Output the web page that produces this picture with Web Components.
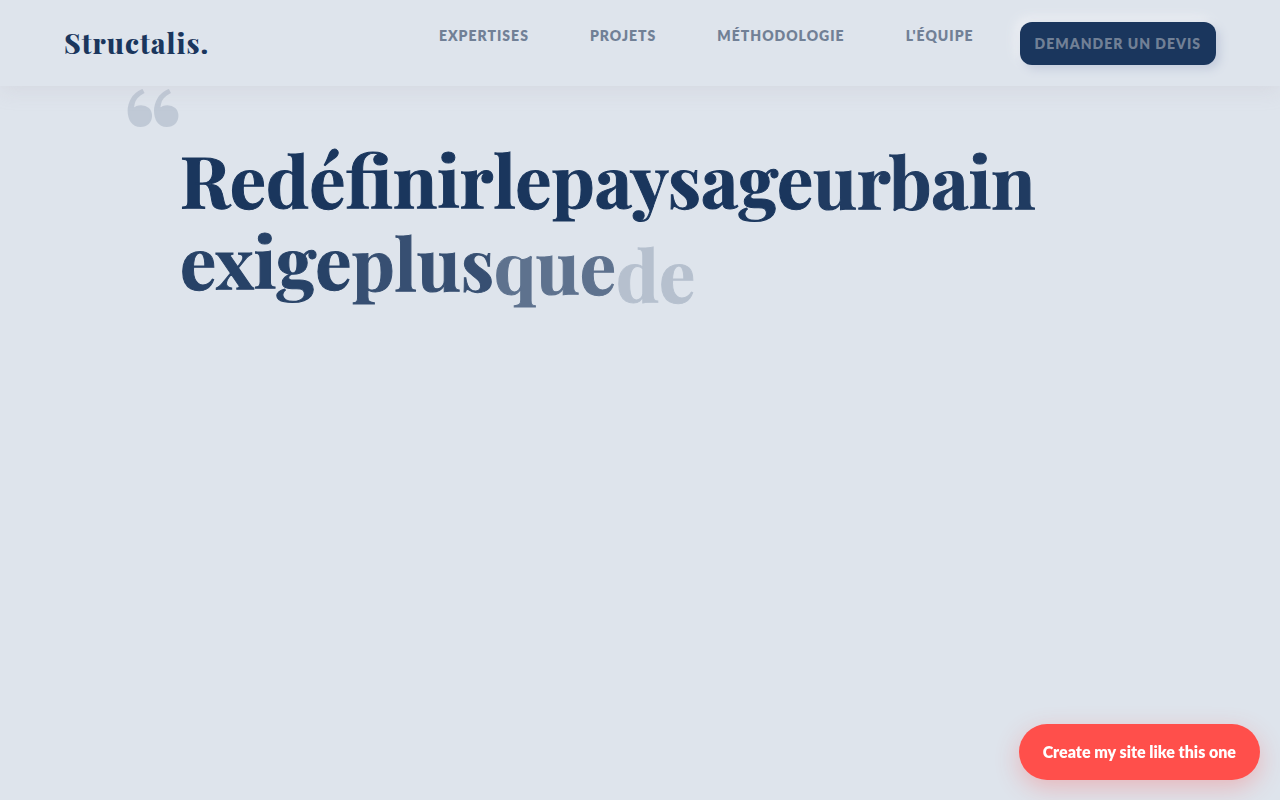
<!DOCTYPE html>
<html lang="fr">
<head>
<meta charset="utf-8">
<meta name="viewport" content="width=device-width, initial-scale=1">
<title>Structalis.</title>
<style>
  :root {
    --navy: #1a365d;
    --slate: #718096;
    --ground: #dee4ec;
    --coral: #ff4f4b;
    --serif: "Playfair Display", "Liberation Serif", serif;
    --sans: Lato, sans-serif;
  }
  body { margin: 0; min-height: 100vh; background: var(--ground); color: var(--navy); font-family: var(--sans); }
</style>
</head>
<body>
<site-header>
  <nav-link href="#expertises">Expertises</nav-link>
  <nav-link href="#projets">Projets</nav-link>
  <nav-link href="#methodologie">Méthodologie</nav-link>
  <nav-link href="#equipe">L'équipe</nav-link>
  <nav-link href="#devis" filled>Demander un devis</nav-link>
</site-header>
<main>
  <hero-quote>
    <reveal-word>Redéfinir</reveal-word>
    <reveal-word>le</reveal-word>
    <reveal-word>paysage</reveal-word>
    <reveal-word progress="0.97">urbain</reveal-word>
    <reveal-word progress="0.93">exige</reveal-word>
    <reveal-word progress="0.85">plus</reveal-word>
    <reveal-word progress="0.65">que</reveal-word>
    <reveal-word progress="0.2">de</reveal-word>
  </hero-quote>
</main>
<floating-action>Create my site like this one</floating-action>

<script>
  class ShadowElement extends HTMLElement {
    constructor() {
      super();
      this.attachShadow({ mode: "open" }).innerHTML = this.constructor.markup;
    }
  }

  customElements.define("site-header", class extends ShadowElement {
    static markup = `
      <style>
        :host { display: block; position: relative; z-index: 1; }
        header { display: flex; justify-content: space-between; align-items: center; box-sizing: border-box;
          min-height: 86px; padding: 0 5%; background: var(--ground); box-shadow: 0 4px 20px rgba(180, 170, 180, .2); }
        .logo { font: 800 28px/40px var(--serif); letter-spacing: 1px; color: var(--navy); text-decoration: none; }
        nav { display: flex; align-items: flex-start; gap: 31px; }
      </style>
      <header>
        <a class="logo" href="#">Structalis.</a>
        <nav aria-label="Navigation principale"><slot></slot></nav>
      </header>`;
  });

  customElements.define("nav-link", class extends ShadowElement {
    static markup = `
      <style>
        :host { display: block; }
        a { display: block; padding: 0 15px; font: 800 14px/27px var(--sans); letter-spacing: 1px;
          text-transform: uppercase; text-decoration: none; white-space: nowrap; color: var(--slate); }
        :host([filled]) a { padding: 8px 15px; border-radius: 12px; background: var(--navy);
          box-shadow: 4px 4px 10px #c3cbdc, -4px -4px 12px #eef0f4; }
      </style>
      <a><slot></slot></a>`;
    connectedCallback() {
      this.shadowRoot.querySelector("a").href = this.getAttribute("href");
    }
  });

  customElements.define("hero-quote", class extends ShadowElement {
    static markup = `
      <style>
        :host { display: block; padding: 52px 5% 0; }
        blockquote { position: relative; max-width: 1024px; margin: 0 auto; padding-left: 52px; box-sizing: border-box; }
        .mark { position: absolute; left: -5px; top: -72px; font: 700 128px/128px var(--serif);
          -webkit-text-stroke: 2px currentColor; opacity: .15; }
        h1 { display: flex; flex-wrap: wrap; margin: 0; font: 700 72px/80px var(--serif);
          -webkit-text-stroke: 1px currentColor; }
      </style>
      <blockquote>
        <span class="mark" aria-hidden="true">“</span>
        <h1><slot></slot></h1>
      </blockquote>`;
  });

  customElements.define("reveal-word", class extends ShadowElement {
    static markup = `
      <style>
        :host { display: block; opacity: var(--progress, 1); transform: translateY(calc((1 - var(--progress, 1)) * 18px)); }
      </style>
      <slot></slot>`;
    connectedCallback() {
      this.style.setProperty("--progress", this.getAttribute("progress") || 1);
    }
  });

  customElements.define("floating-action", class extends ShadowElement {
    static markup = `
      <style>
        :host { display: block; position: fixed; right: 20px; bottom: 20px; z-index: 2; }
        button { display: block; padding: 16px 24px; border: 0; border-radius: 28px; background: var(--coral);
          color: #fff; font: 800 16px/24px var(--sans); cursor: pointer; box-shadow: 0 8px 24px rgba(255, 79, 75, .3); }
      </style>
      <button type="button"><slot></slot></button>`;
  });
</script>
</body>
</html>
